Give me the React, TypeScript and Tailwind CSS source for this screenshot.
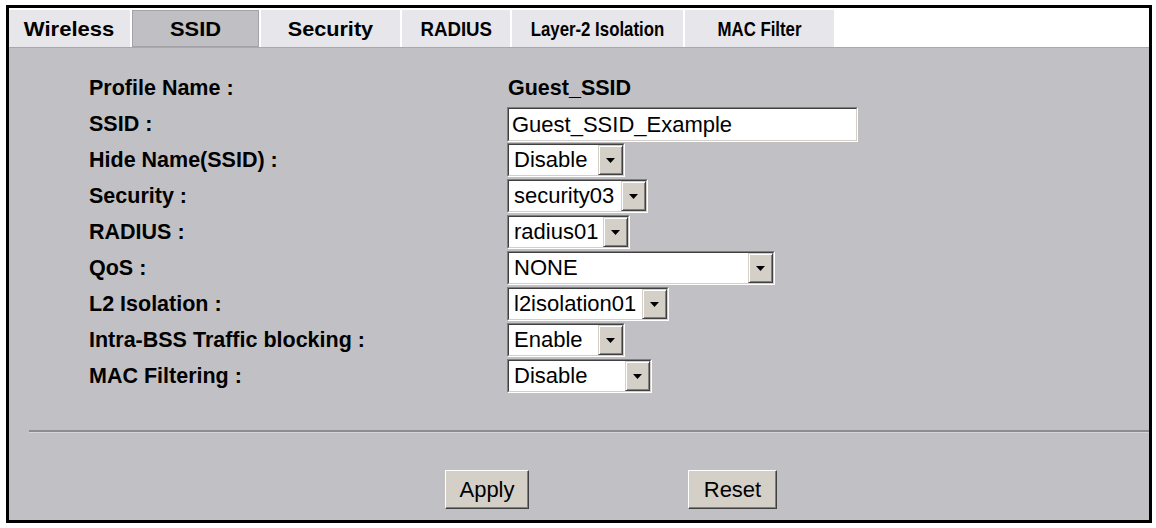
import React from "react";

const tabs = [
  { label: "Wireless", w: "w-[121px]", s: "scale-x-[1.05]" },
  { label: "SSID", w: "w-[127px]", s: "scale-x-[1.04]", active: true },
  { label: "Security", w: "w-[139px]", s: "scale-x-[1.03]" },
  { label: "RADIUS", w: "w-[108px]", s: "scale-x-[0.89]" },
  { label: "Layer-2 Isolation", w: "w-[171px]", s: "scale-x-[0.8]" },
  { label: "MAC Filter", w: "w-[149px]", s: "scale-x-[0.8]" },
];

const Arrow = () => (
  <svg width="9" height="5" viewBox="0 0 9 5">
    <polygon points="0,0 9,0 4.5,5" fill="#000" />
  </svg>
);

const Select = ({ value, className }: { value: string; className: string }) => (
  <div
    className={`flex h-[34px] border border-t-[#808080] border-l-[#808080] border-b-white border-r-white ${className}`}
  >
    <div className="flex flex-1 border border-t-[#404040] border-l-[#404040] border-b-[#d4d0c8] border-r-[#d4d0c8] bg-white">
      <div className="flex-1 pl-[5px] text-[22px] leading-[30px] text-black whitespace-nowrap">
        {value}
      </div>
      <div className="w-[25px] flex items-center justify-center bg-[#d4d0c8] border border-t-[#d4d0c8] border-l-[#d4d0c8] border-b-[#404040] border-r-[#404040] shadow-[inset_1px_1px_0_#ffffff,inset_-1px_-1px_0_#808080]">
        <Arrow />
      </div>
    </div>
  </div>
);

const Button = ({ label, className }: { label: string; className: string }) => (
  <div
    className={`h-[39px] flex items-center justify-center bg-[#d4d0c8] border border-t-white border-l-white border-b-[#404040] border-r-[#404040] shadow-[inset_-1px_-1px_0_#808080] text-[22px] text-black ${className}`}
  >
    {label}
  </div>
);

const rows: { label: string; field: React.ReactNode }[] = [
  {
    label: "Profile Name :",
    field: <span className="font-bold text-[21.5px] pl-[1px]">Guest_SSID</span>,
  },
  {
    label: "SSID :",
    field: (
      <div className="flex h-[35px] w-[351px] border border-t-[#808080] border-l-[#808080] border-b-white border-r-white">
        <div className="flex-1 border border-t-[#404040] border-l-[#404040] border-b-[#d4d0c8] border-r-[#d4d0c8] bg-white pl-[3px] text-[22px] leading-[31px] text-black">
          Guest_SSID_Example
        </div>
      </div>
    ),
  },
  { label: "Hide Name(SSID) :", field: <Select value="Disable" className="w-[118px]" /> },
  { label: "Security :", field: <Select value="security03" className="w-[141px]" /> },
  { label: "RADIUS :", field: <Select value="radius01" className="w-[123px]" /> },
  { label: "QoS :", field: <Select value="NONE" className="w-[268px]" /> },
  { label: "L2 Isolation :", field: <Select value="l2isolation01" className="w-[162px]" /> },
  { label: "Intra-BSS Traffic blocking :", field: <Select value="Enable" className="w-[118px]" /> },
  { label: "MAC Filtering :", field: <Select value="Disable" className="w-[145px]" /> },
];

export default function App() {
  return (
    <div className="w-[1156px] h-[528px] bg-white overflow-hidden pt-[5px] font-['Liberation_Sans',Arial,sans-serif] text-black">
      <div className="ml-[6px] w-[1146px] h-[518px] border-[3px] border-black bg-white flex flex-col">
        <div className="flex gap-[2px] pt-[2px] h-[39px]">
          {tabs.map((t) => (
            <div
              key={t.label}
              className={`${t.w} h-[37px] flex items-center justify-center text-[21px] font-bold whitespace-nowrap ${
                t.active
                  ? "bg-[#c0bfc3] border border-[#a4a3a7]"
                  : "bg-[#e7e6ea]"
              }`}
            >
              <span className={`inline-block ${t.s}`}>{t.label}</span>
            </div>
          ))}
        </div>
        <div className="flex-1 bg-[#c1c0c4] border-t border-[#a9a8ac] flex flex-col">
          <div className="pt-[22px] pl-[80px] grid grid-cols-[418px_1fr] auto-rows-[36px]">
            {rows.map((r) => (
              <React.Fragment key={r.label}>
                <div className="flex items-center text-[21.5px] font-bold whitespace-nowrap">
                  {r.label}
                </div>
                <div className="flex items-center">{r.field}</div>
              </React.Fragment>
            ))}
          </div>
          <div className="mt-[36px] ml-[20px] h-[2px] bg-[#8d8c90] border-b border-[#d6d5d9] box-content" />
          <div className="flex mt-[37px] pl-[436px]">
            <Button label="Apply" className="w-[84px]" />
            <Button label="Reset" className="w-[89px] ml-[159px]" />
          </div>
        </div>
      </div>
    </div>
  );
}
